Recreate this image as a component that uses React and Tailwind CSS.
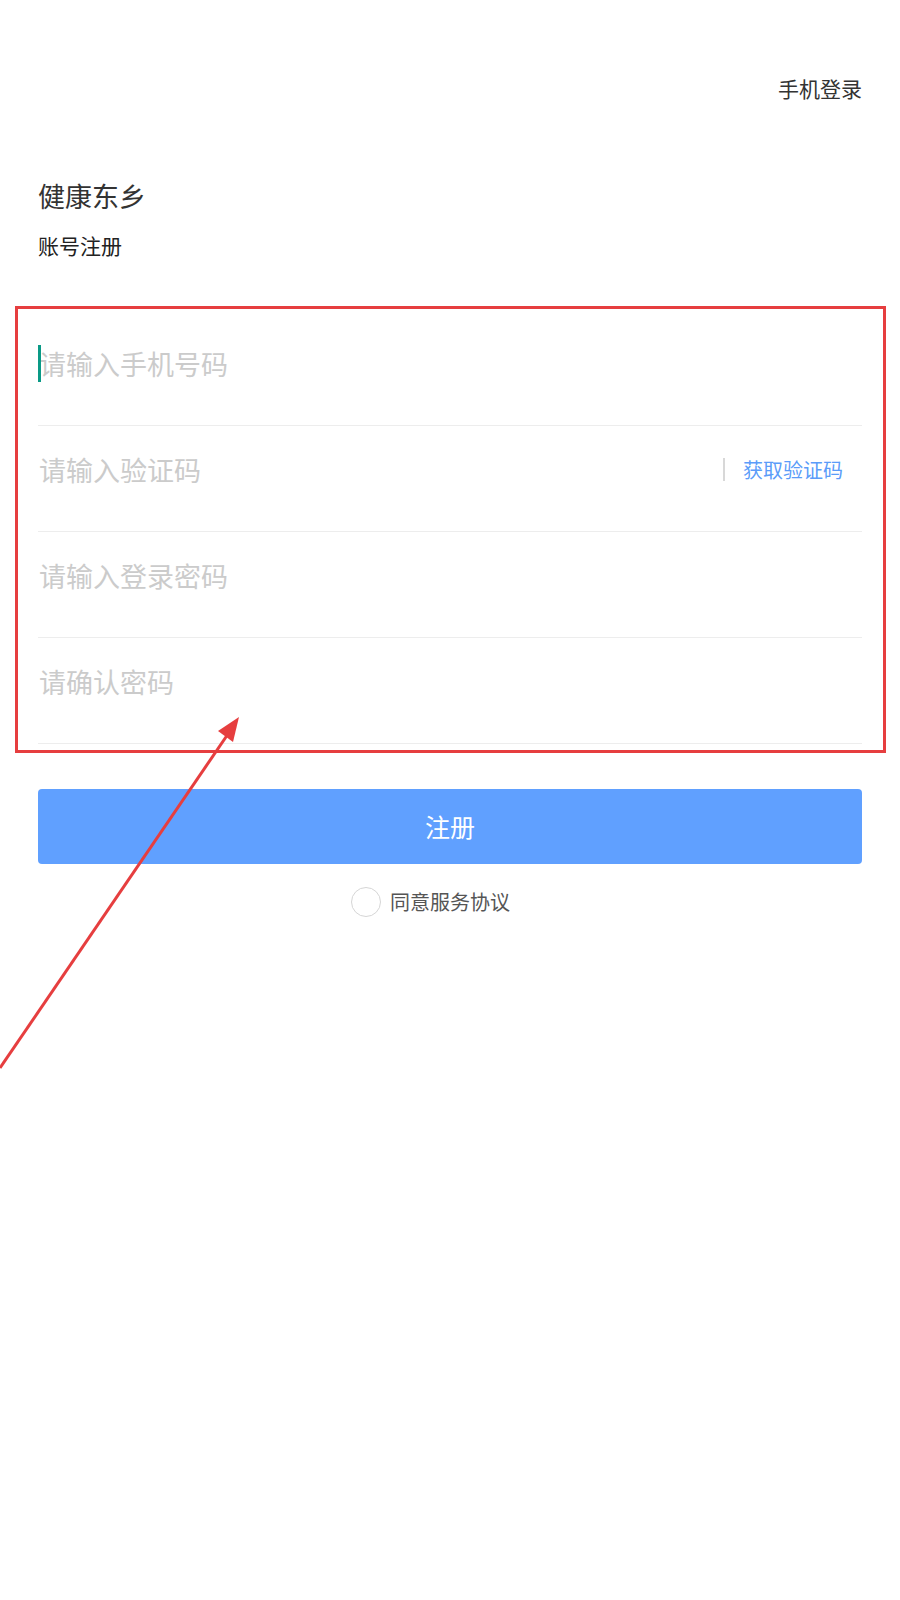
import React from "react";

const font = { fontFamily: '"Noto Sans CJK SC", "Noto Sans", sans-serif' };

function Row({ placeholder, caret, children }) {
  return (
    <div className="flex h-[106px] items-start border-b border-[#ededed] pt-[25px]">
      <div className="relative flex h-[37px] flex-1 items-center">
        {caret && <span className="absolute left-0 top-0 h-[37px] w-[3px] bg-[#0a9a86]" />}
        <span className="pl-px text-[27px] leading-[37px] text-[#cbcbcb]">{placeholder}</span>
      </div>
      {children}
    </div>
  );
}

export default function App() {
  return (
    <div className="relative min-h-[1600px] w-[900px] bg-white" style={font}>
      <div className="flex justify-end px-[38px] pt-[74px]">
        <span className="text-[21px] leading-[28px] text-[#333]">手机登录</span>
      </div>
      <div className="px-[38px] pt-[76px]">
        <div className="text-[27px] leading-[36px] text-[#333]">健康东乡</div>
        <div className="mt-[17px] text-[21px] leading-[28px] text-[#222]">账号注册</div>
      </div>
      <div className="px-[38px] pt-[61px]">
        <Row placeholder="请输入手机号码" caret />
        <Row placeholder="请输入验证码">
          <div className="flex h-[37px] items-center pr-[19px]">
            <span className="h-[23px] w-[2px] bg-[#d8d8d8]" />
            <span className="ml-[18px] text-[20px] leading-[28px] text-[#5b9cf9]">获取验证码</span>
          </div>
        </Row>
        <Row placeholder="请输入登录密码" />
        <Row placeholder="请确认密码" />
        <button className="mt-[45px] flex h-[75px] w-full items-center justify-center rounded-[4px] bg-[#60a0ff] text-[25px] text-white">
          注册
        </button>
        <div className="mt-[23px] flex items-center justify-center pr-[39px]">
          <span className="h-[30px] w-[30px] rounded-full border border-[#d6d6d6]" />
          <span className="ml-[9px] text-[20px] leading-[28px] text-[#555]">同意服务协议</span>
        </div>
      </div>

      <div className="pointer-events-none absolute left-[15px] top-[306px] h-[447px] w-[871px] border-[3px] border-[#e63e3f]" />
      <svg className="pointer-events-none absolute left-0 top-0" width="900" height="1600">
        <line x1="0" y1="1068" x2="228" y2="734" stroke="#e63e3f" strokeWidth="3" />
        <polygon points="239,717 218,731 233,742" fill="#e63e3f" />
      </svg>
    </div>
  );
}
